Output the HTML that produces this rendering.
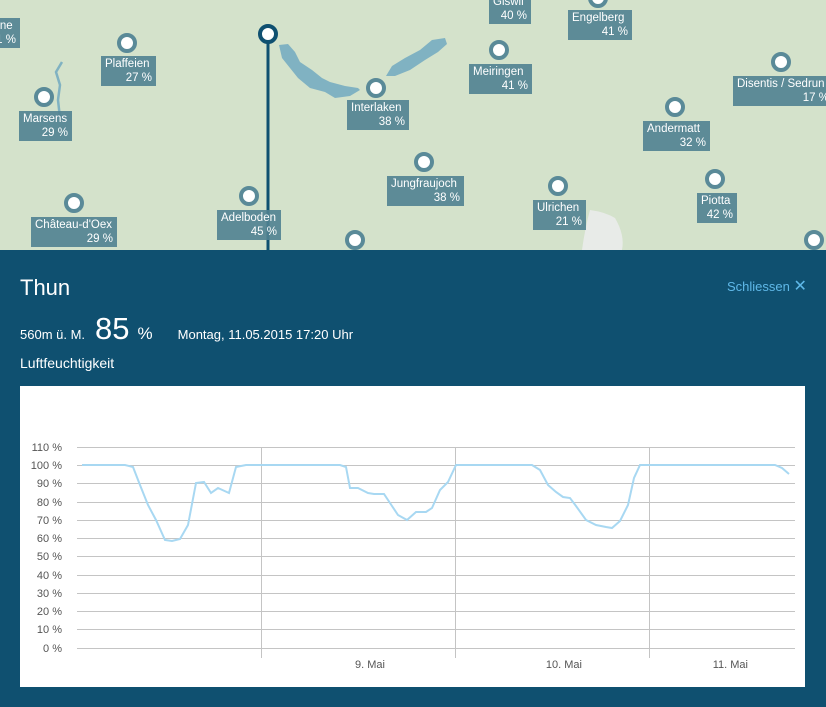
<!DOCTYPE html>
<html><head><meta charset="utf-8"><style>
body{margin:0;width:826px;height:707px;overflow:hidden;font-family:"Liberation Sans",sans-serif;position:relative;background:#0f5070}
#map{position:absolute;left:0;top:0;width:826px;height:250px;background:#d4e2cb;overflow:hidden}
.lb{position:absolute;background:rgba(80,130,145,.9);color:#fff;font-size:11.5px;line-height:14px;padding:1px 4px;text-align:right;box-sizing:border-box;height:30px;white-space:nowrap}
.lb div:first-child{text-align:left}
.c{position:absolute;width:12px;height:12px;border-radius:50%;background:#fff;border:4px solid #5a8a98;margin:-10px 0 0 -10px}
</style></head><body>
<div id="map">
<svg width="826" height="250" style="position:absolute;left:0;top:0">
<path d="M279 45 L288 44 L295 52 L300 62 L312 70 L322 78 L330 82 L345 86 L358 88 L360 90 L350 96 L335 98 L325 92 L310 88 L298 78 L290 68 L282 58 Z" fill="#80b2c2"/>
<path d="M386 76 L392 66 L405 58 L420 50 L432 40 L445 38 L447 44 L438 52 L425 60 L410 70 L395 76 Z" fill="#80b2c2"/>
<path d="M62 62 L56 72 L60 85 L58 100 L60 118" stroke="#80b2c2" stroke-width="2.5" fill="none"/>
<path d="M590 210 Q605 212 615 218 Q625 235 622 250 L582 250 Q585 228 590 210 Z" fill="#e8ebe8"/>
<line x1="268" y1="34" x2="268" y2="250" stroke="#0f5070" stroke-width="3"/>
<circle cx="268" cy="34" r="8" fill="#fff" stroke="#0f5070" stroke-width="4"/>
</svg>
<div class="lb" style="left:-22px;top:18px;width:42px"><div>Berne</div><div>1 %</div></div>
<div class="c" style="left:127px;top:43px"></div><div class="lb" style="left:101px;top:56px;width:55px"><div>Plaffeien</div><div>27 %</div></div>
<div class="c" style="left:44px;top:97px"></div><div class="lb" style="left:19px;top:111px;width:53px"><div>Marsens</div><div>29 %</div></div>
<div class="c" style="left:74px;top:203px"></div><div class="lb" style="left:31px;top:217px;width:86px"><div>Château-d'Oex</div><div>29 %</div></div>
<div class="c" style="left:249px;top:196px"></div><div class="lb" style="left:217px;top:210px;width:64px"><div>Adelboden</div><div>45 %</div></div>
<div class="c" style="left:376px;top:88px"></div><div class="lb" style="left:347px;top:100px;width:62px"><div>Interlaken</div><div>38 %</div></div>
<div class="c" style="left:424px;top:162px"></div><div class="lb" style="left:387px;top:176px;width:77px"><div>Jungfraujoch</div><div>38 %</div></div>
<div class="lb" style="left:489px;top:-6px;width:42px"><div>Giswil</div><div>40 %</div></div>
<div class="c" style="left:598px;top:-2px"></div><div class="lb" style="left:568px;top:10px;width:64px"><div>Engelberg</div><div>41 %</div></div>
<div class="c" style="left:499px;top:50px"></div><div class="lb" style="left:469px;top:64px;width:63px"><div>Meiringen</div><div>41 %</div></div>
<div class="c" style="left:781px;top:62px"></div><div class="lb" style="left:733px;top:76px;width:100px"><div>Disentis / Sedrun</div><div>17 %</div></div>
<div class="c" style="left:675px;top:107px"></div><div class="lb" style="left:643px;top:121px;width:67px"><div>Andermatt</div><div>32 %</div></div>
<div class="c" style="left:558px;top:186px"></div><div class="lb" style="left:533px;top:200px;width:53px"><div>Ulrichen</div><div>21 %</div></div>
<div class="c" style="left:715px;top:179px"></div><div class="lb" style="left:697px;top:193px;width:40px"><div>Piotta</div><div>42 %</div></div>
<div class="c" style="left:355px;top:240px"></div><div class="c" style="left:814px;top:240px"></div>
</div>
<div style="position:absolute;left:20px;top:275px;color:#fff;font-size:22px">Thun</div>
<div style="position:absolute;left:727px;top:276px;color:#5fb8e8;font-size:13px">Schliessen <span style="font-size:16px">✕</span></div>
<div style="position:absolute;left:20px;top:305px;color:#fff;font-size:13px;white-space:nowrap;line-height:48px"><span>560m ü. M.</span><span style="font-size:31px;margin-left:10px">85</span><span style="font-size:17px;margin-left:8px">%</span><span style="margin-left:25px">Montag, 11.05.2015 17:20 Uhr</span></div>
<div style="position:absolute;left:20px;top:355px;color:#fff;font-size:14px">Luftfeuchtigkeit</div>
<svg style="position:absolute;left:20px;top:386px" width="785" height="301">
<rect width="785" height="301" fill="#fff"/>
<g transform="translate(-20,-386)" font-size="11" fill="#555" text-anchor="end" font-family="Liberation Sans,sans-serif">
<g stroke="#c4c4c4" stroke-width="1">
<line x1="77" x2="795" y1="447.5" y2="447.5"/><line x1="77" x2="795" y1="465.5" y2="465.5"/><line x1="77" x2="795" y1="483.5" y2="483.5"/><line x1="77" x2="795" y1="502.5" y2="502.5"/><line x1="77" x2="795" y1="520.5" y2="520.5"/><line x1="77" x2="795" y1="538.5" y2="538.5"/><line x1="77" x2="795" y1="556.5" y2="556.5"/><line x1="77" x2="795" y1="575.5" y2="575.5"/><line x1="77" x2="795" y1="593.5" y2="593.5"/><line x1="77" x2="795" y1="611.5" y2="611.5"/><line x1="77" x2="795" y1="629.5" y2="629.5"/><line x1="77" x2="795" y1="648.5" y2="648.5"/>
<line x1="261.5" x2="261.5" y1="447" y2="658"/><line x1="455.5" x2="455.5" y1="447" y2="658"/><line x1="649.5" x2="649.5" y1="447" y2="658"/>
</g>
<text x="62" y="451">110 %</text><text x="62" y="469">100 %</text><text x="62" y="487">90 %</text><text x="62" y="506">80 %</text><text x="62" y="524">70 %</text><text x="62" y="542">60 %</text><text x="62" y="560">50 %</text><text x="62" y="579">40 %</text><text x="62" y="597">30 %</text><text x="62" y="615">20 %</text><text x="62" y="633">10 %</text><text x="62" y="652">0 %</text>
<text x="385" y="668">9. Mai</text><text x="582" y="668">10. Mai</text><text x="748" y="668">11. Mai</text>
<polyline fill="none" stroke="#a8d8f2" stroke-width="2" points="82,465 125,465 133,467 140,485 148,505 156,520 165,540 172,541 180,539 188,525 196,483 204,482 211,493 218,488 229,493 236,467 246,465 340,465 346,467 350,488 358,488 368,493 374,494 384,494 390,503 398,515 407,520 416,512 426,512 432,508 440,490 448,482 456,465 532,465 540,470 548,485 556,492 563,497 570,498 576,506 586,520 596,525 606,527 612,528 620,521 628,505 634,478 640,465 775,465 782,468 789,474"/>
</g></svg>
</body></html>
